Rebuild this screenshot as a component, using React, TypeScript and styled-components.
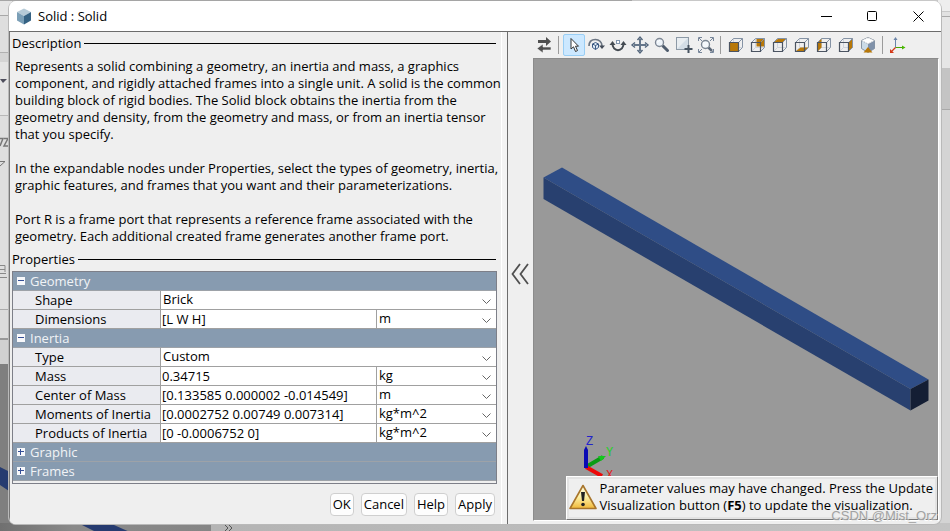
import React, { useState } from 'react';
import styled, { createGlobalStyle } from 'styled-components';

const GlobalStyle = createGlobalStyle`
  * { box-sizing: border-box; }
  body {
    margin: 0;
    overflow: hidden;
    color: #000;
    font: 13px/17px "Open Sans", "Noto Sans", sans-serif;
  }
  button, input, select { font: inherit; color: inherit; }
`;

const Desktop = styled.div`
  position: relative;
  display: flex;
  min-height: 100vh;
  padding: 1px 8px 8px 8px;
  background:
    linear-gradient(#a5a5a5, #a5a5a5) left top / 632px 1px no-repeat,
    linear-gradient(90deg, #707070, #8a8a8a 35%, #858585) left bottom / 211px 10px no-repeat,
    linear-gradient(90deg, #b4b4b4, #c4c4c4) right bottom / calc(100% - 211px) 10px no-repeat,
    linear-gradient(
      #e6e6e6 15px, #a8a8a8 15px 16px, #dedede 16px 52px, #b0b0b0 52px 53px,
      #d4d4d4 53px 62px, #e4e4e4 62px 115px, #b8b8b8 115px 116px, #dedede 116px 309px,
      #aaa 309px 310px, #dcdcdc 310px 338px, #999 338px 340px, #d0d0d0 340px 364px, #7f7f7f 364px
    ) left top / 12px 100% no-repeat,
    linear-gradient(
      #eee 11px, #c9c9c9 11px 12px, #e2e2e2 12px 16px, #a9a9a9 16px 17px,
      #e6e6e6 17px 68px, #c4c4c4 68px 109px, #a9a9a9 109px 110px, #d4d4d4 110px
    ) right top / 12px 100% no-repeat,
    #c8c8c8;
`;

const Behind = styled.svg`
  position: absolute;
  left: 0;
  bottom: 0;
`;

const BehindLeft = styled.svg`
  position: absolute;
  left: 0;
  top: 0;
`;

const Dialog = styled.main`
  position: relative;
  flex: 1;
  min-width: 0;
  display: flex;
  flex-direction: column;
  background: #efefef;
  border: 1px solid #b9b9b9;
  border-top: 0;
  border-radius: 8px;
  overflow: hidden;
`;

const TitleBar = styled.header`
  flex: none;
  height: 31px;
  display: flex;
  align-items: center;
  padding-left: 7px;
  background: #fff;
  border-bottom: 1px solid #6c6c6c;
`;

const Title = styled.h1`
  flex: 1;
  margin: 0 0 0 6px;
  font-size: 13px;
  font-weight: 400;
`;

const WindowButton = styled.button`
  width: 46px;
  height: 28px;
  padding: 0;
  border: 0;
  background: none;
  display: grid;
  place-items: center;
`;

const Body = styled.div`
  flex: 1;
  display: grid;
  grid-template-columns: minmax(0, 499fr) minmax(0, 433fr);
`;

const LeftPane = styled.section`
  display: flex;
  flex-direction: column;
  border-left: 1px solid #777;
  border-right: 1px solid #6c6c6c;
  padding-right: 5px;
  background: #f3f3f3;
`;

const Form = styled.form`
  flex: 1;
  min-width: 0;
  display: flex;
  flex-direction: column;
  padding: 3px 4px 0 2px;
  background: #efefef;
  border-right: 1px solid #fff;
`;

const Legend = styled.h2`
  display: flex;
  align-items: center;
  gap: 3px;
  margin: 0 1px 0 0;
  font-size: 13px;
  font-weight: 400;
  &::after {
    content: "";
    flex: 1;
    height: 1px;
    background: #000;
  }
`;

const Description = styled.div`
  padding: 6px 0 6px 3px;
  white-space: pre;
`;

const Paragraph = styled.p`
  margin: 0;
  & + & { margin-top: 17px; }
`;

const TableFrame = styled.div`
  margin-top: 3px;
  padding-bottom: 2px;
  border: 1px solid #7d7f88;
`;

const PropertyTable = styled.table`
  width: 100%;
  table-layout: fixed;
  border-collapse: separate;
  border-spacing: 0;
`;

const Column = styled.col<{ $width?: number }>`
  width: ${(p) => (p.$width ? `${p.$width}px` : 'auto')};
`;

const GroupCell = styled.th`
  height: 19px;
  padding: 0;
  font-weight: 400;
  text-align: left;
  background: #879bb0;
  border-bottom: 1px solid #9da2a8;
`;

const GroupButton = styled.button`
  display: flex;
  align-items: center;
  gap: 5px;
  height: 18px;
  padding: 0 0 0 4px;
  border: 0;
  background: none;
  color: #f1f3f6;
  line-height: 17px;
`;

const LabelCell = styled.th`
  height: 19px;
  padding: 0 0 0 22px;
  font-weight: 400;
  text-align: left;
  line-height: 18px;
  white-space: nowrap;
  background: #eaebf0;
  border-right: 1px solid #a0a0a0;
  border-bottom: 1px solid #a0a0a0;
`;

const ValueCell = styled.td<{ $divided?: boolean }>`
  height: 19px;
  padding: 0;
  background: #fff;
  border-right: ${(p) => (p.$divided ? '1px solid #a0a0a0' : '0')};
  border-bottom: 1px solid #a0a0a0;
`;

const TextField = styled.input`
  display: block;
  width: 100%;
  height: 18px;
  padding: 0 1px;
  border: 0;
  outline: 0;
  background: none;
`;

const SelectWrap = styled.div`
  display: flex;
  align-items: center;
  position: relative;
`;

const Select = styled.select`
  appearance: none;
  width: 100%;
  height: 18px;
  padding: 0 18px 2px 2px;
  border: 0;
  outline: 0;
  background: none;
`;

const SelectArrow = styled.svg`
  position: absolute;
  right: 5px;
  top: 8px;
  pointer-events: none;
`;

const Actions = styled.div`
  display: flex;
  justify-content: flex-end;
  gap: 7px;
  padding: 9px 2px 8px 0;
`;

const ActionButton = styled.button`
  height: 23px;
  padding: 0 2px;
  border: 1px solid #cfcfcf;
  border-radius: 4px;
  background: #fdfdfd;
`;

const RightPane = styled.section`
  display: flex;
  min-width: 0;
`;

const CollapseButton = styled.button`
  flex: none;
  width: 25px;
  padding: 0 2px 4px 0;
  border: 0;
  background: none;
`;

const Viewer = styled.div`
  flex: 1;
  min-width: 0;
  display: flex;
  flex-direction: column;
  padding: 0 2px 3px 0;
`;

const Toolbar = styled.div`
  flex: none;
  display: flex;
  align-items: center;
  height: 26px;
`;

const ToolButton = styled.button<{ $active?: boolean }>`
  flex: none;
  width: 22px;
  height: 22px;
  padding: 0;
  border: 1px solid ${(p) => (p.$active ? '#99cef5' : 'transparent')};
  border-radius: 2px;
  background: ${(p) => (p.$active ? '#cce8ff' : 'none')};
  display: grid;
  place-items: center;
`;

const ToolDivider = styled.span`
  flex: none;
  width: 1px;
  height: 18px;
  margin: 0 4px 0 3px;
  background: #9b9b9b;
`;

const Canvas = styled.div`
  position: relative;
  flex: 1;
  min-height: 0;
  background: #999;
  border: 1px solid #8b8b8b;
  border-right: 1px solid #fff;
  border-bottom: 1px solid #fff;
`;

const Scene = styled.svg`
  position: absolute;
  left: 0;
  top: 0;
  width: 100%;
`;

const AxisLabel = styled.text`
  font: 12px "Liberation Mono", monospace;
`;

const Notice = styled.div`
  position: absolute;
  right: 0;
  bottom: 0;
  display: flex;
  align-items: center;
  gap: 3px;
  height: 44px;
  padding: 0 4px 2px 2px;
  white-space: nowrap;
  background: #efefef;
  border: 1px solid #fff;
  border-right-color: #777;
  border-bottom-color: #777;
  box-shadow: inset 2px 2px #e3e3e3, inset -2px -2px #e3e3e3;
`;

const Watermark = styled.span`
  position: absolute;
  right: 4px;
  bottom: 0;
  color: #a2a2a2;
  font: 13px/16px "Liberation Sans", sans-serif;
  text-shadow: 1px 1px #e9e9e9;
`;

/* ---------- icons ---------- */

const Glyph = ({ children, size = 20 }: { children: React.ReactNode; size?: number }) => (
  <svg width={size} height={size} viewBox={`0 0 ${size} ${size}`} fill="none" aria-hidden="true">
    {children}
  </svg>
);

const AppIcon = () => (
  <svg width="16" height="17" viewBox="0 0 16 17" aria-hidden="true">
    <path d="M8 .5 15 4 8 8 1 4Z" fill="#b5cad7" />
    <path d="M1 4 8 8V16.500L1 12.500Z" fill="#7b9fb7" />
    <path d="M15 4 8 8V16.500L15 12.500Z" fill="#356283" />
  </svg>
);

const SwapIcon = () => (
  <Glyph>
    <path d="M4 5H12V2L17 6.500 12 11V8H4Z" fill="#505050" />
    <path d="M17 12H9V9L3 13.500 9 18V15H17Z" fill="#505050" stroke="#efefef" strokeWidth=".6" />
  </Glyph>
);

const PointerIcon = () => (
  <Glyph>
    <path d="M7 3.500V14L9.500 11.800 11.500 16.500 13.500 15.600 11.500 11.200H14.500Z" fill="#fff" stroke="#333" />
  </Glyph>
);

const OrbitIcon = () => (
  <Glyph>
    <path d="M3 11C3 6 6 4.500 9.500 4.500S16 7 16 11" stroke="#6c7683" strokeWidth="1.700" />
    <path d="M13 10.500H19L16 14Z" fill="#444c58" />
    <path d="M9.500 7.500 12.500 9V12.500L9.500 14.500 6.500 12.500V9Z" fill="#dfe9f4" stroke="#3c5a83" />
    <path d="M6.500 9 9.500 10.500 12.500 9M9.500 10.500V14.500" stroke="#3c5a83" />
  </Glyph>
);

const RollIcon = () => (
  <Glyph>
    <path d="M4.500 8C4 17.500 16 17.500 15.500 8" stroke="#444b52" strokeWidth="2" />
    <path d="M1.500 10 4.500 6 7.500 10ZM12.500 10 15.500 6 18.500 10Z" fill="#444b52" />
    <rect x="8.500" y="5.500" width="3" height="3" fill="#fff" stroke="#8195ad" />
  </Glyph>
);

const PanIcon = () => (
  <Glyph>
    <path d="M10 4V16M4 10H16" stroke="#65768a" strokeWidth="2" />
    <path d="M7.500 5 10 2 12.500 5M7.500 15 10 18 12.500 15M5 7.500 2 10 5 12.500M15 7.500 18 10 15 12.500" stroke="#52657b" strokeWidth="1.400" />
  </Glyph>
);

const ZoomIcon = () => (
  <Glyph>
    <path d="m11 11 4.500 4.500" stroke="#4f5c6d" strokeWidth="3" strokeLinecap="round" />
    <circle cx="7.500" cy="7.500" r="4" fill="#eef4fa" stroke="#7e8794" strokeWidth="1.400" />
    <path d="M5 7.500 8 5" stroke="#fff" />
  </Glyph>
);

const ZoomRegionIcon = () => (
  <Glyph>
    <rect x="2.500" y="2.500" width="12" height="12" fill="#d3dde6" stroke="#8c99a6" />
    <path d="M3 14 14 3H3Z" fill="#e8edf1" />
    <path d="M14.500 10V18M10.500 14H18.500" stroke="#465361" strokeWidth="2" />
  </Glyph>
);

const FitIcon = () => (
  <Glyph>
    <path d="M2.500 6V2.500H6M14 2.500H17.500V6M17.500 14V17.500H14M6 17.500H2.500V14M3 3 6 6M17 3 14 6M3 17 6 14M14 14 17 17" stroke="#77869a" />
    <path d="m12 12 4 4" stroke="#5c6878" strokeWidth="2.500" />
    <circle cx="9.500" cy="9.500" r="4" fill="#f5f9fc" stroke="#7c8793" strokeWidth="1.400" />
  </Glyph>
);

const faces: Record<string, string> = {
  front: 'M3.500 7.500H12.500V16.500H3.500Z',
  back: 'M8.500 3.500H16.500V11.500H8.500Z',
  top: 'M3.500 7.500 8.500 3.500H16.500L12.500 7.500Z',
  bottom: 'M3.500 16.500 8.500 12.500H16.500L12.500 16.500Z',
  left: 'M3.500 7.500 7.500 3.500V12.500L3.500 16.500Z',
  right: 'M12.500 7.500 16.500 3.500V12.500L12.500 16.500Z',
};

const CubeIcon = ({ face }: { face: string }) => (
  <Glyph>
    <path d="M7.500 3.500V12.500H16.500M3.500 16.500 7.500 12.500" stroke="#cfd4dc" />
    <path d={faces[face]} fill="#b87808" />
    <path d="M3.500 7.500 7.500 3.500H16.500V12.500L12.500 16.500M12.500 7.500 16.500 3.500" stroke="#8593a5" />
    <path d="M3.500 7.500H12.500V16.500H3.500Z" stroke="#4b5462" strokeWidth="1.200" />
  </Glyph>
);

const IsoIcon = () => (
  <Glyph>
    <path d="M10 2.500 16.500 5.500V13.500L10 17.500 3.500 13.500V5.500Z" fill="#cbdbe7" stroke="#8794a3" />
    <path d="M10 9 16.500 5.500V13.500L10 17.500Z" fill="#8092aa" />
    <path d="M10 2.500 16.500 5.500 10 9 3.500 5.500Z" fill="#fff" stroke="#a4aab2" strokeDasharray="1 1" />
    <path d="M10 12 14.500 17.500H5.500Z" fill="#b87808" />
  </Glyph>
);

const AxesIcon = () => (
  <Glyph>
    <path d="M7.500 4V12.500" stroke="#6a84a8" />
    <path d="M5.500 5 7.500 2 9.500 5Z" fill="#6a84a8" />
    <path d="M7.500 12.500H15" stroke="#48a800" />
    <path d="M14 10.500 17.500 12.500 14 14.500Z" fill="#48b800" />
    <path d="M7.500 12.500 3 17" stroke="#d43818" strokeWidth="1.300" />
    <path d="M2 14V18H6Z" fill="#d43818" />
  </Glyph>
);

const WarningIcon = () => (
  <svg width="28" height="26" viewBox="0 0 28 26" aria-hidden="true">
    <defs>
      <linearGradient id="warn" x2="0" y2="1">
        <stop offset="0" stopColor="#fffbe0" />
        <stop offset=".5" stopColor="#fdf0a6" />
        <stop offset="1" stopColor="#f0b838" />
      </linearGradient>
    </defs>
    <path d="M14 1.500 27 24.500H1Z" fill="url(#warn)" stroke="#a8752c" strokeWidth="1.600" strokeLinejoin="round" />
    <path d="M12 8H16L15 17H13Z" fill="#222" />
    <circle cx="14" cy="20.500" r="1.800" fill="#222" />
  </svg>
);

const ToggleIcon = ({ open }: { open: boolean }) => (
  <svg width="8" height="8" viewBox="0 0 8 8" aria-hidden="true">
    <path d="M0 0H8V8H0Z" fill="#f7f8fb" />
    <path d="M1 3H7V4H1Z" fill="#354f96" />
    {!open && <path d="M3 1H4V7H3Z" fill="#354f96" />}
  </svg>
);

/* ---------- data ---------- */

type Row = { label: string; value?: string; choice?: string; unit?: string };
type Group = { name: string; open: boolean; rows: Row[] };

const groups: Group[] = [
  {
    name: 'Geometry',
    open: true,
    rows: [
      { label: 'Shape', choice: 'Brick' },
      { label: 'Dimensions', value: '[L W H]', unit: 'm' },
    ],
  },
  {
    name: 'Inertia',
    open: true,
    rows: [
      { label: 'Type', choice: 'Custom' },
      { label: 'Mass', value: '0.34715', unit: 'kg' },
      { label: 'Center of Mass', value: '[0.133585 0.000002 -0.014549]', unit: 'm' },
      { label: 'Moments of Inertia', value: '[0.0002752 0.00749 0.007314]', unit: 'kg*m^2' },
      { label: 'Products of Inertia', value: '[0 -0.0006752 0]', unit: 'kg*m^2' },
    ],
  },
  { name: 'Graphic', open: false, rows: [] },
  { name: 'Frames', open: false, rows: [] },
];

const description = [
  'Represents a solid combining a geometry, an inertia and mass, a graphics\ncomponent, and rigidly attached frames into a single unit. A solid is the common\nbuilding block of rigid bodies. The Solid block obtains the inertia from the\ngeometry and density, from the geometry and mass, or from an inertia tensor\nthat you specify.',
  'In the expandable nodes under Properties, select the types of geometry, inertia,\ngraphic features, and frames that you want and their parameterizations.',
  'Port R is a frame port that represents a reference frame associated with the\ngeometry. Each additional created frame generates another frame port.',
];

const navigationTools = [
  { name: 'Select', icon: <PointerIcon /> },
  { name: 'Rotate', icon: <OrbitIcon /> },
  { name: 'Roll', icon: <RollIcon /> },
  { name: 'Pan', icon: <PanIcon /> },
  { name: 'Zoom', icon: <ZoomIcon /> },
  { name: 'Zoom to region', icon: <ZoomRegionIcon /> },
  { name: 'Fit to view', icon: <FitIcon /> },
];

const Dropdown = ({ id, label, value }: { id?: string; label?: string; value: string }) => (
  <SelectWrap>
    <Select id={id} aria-label={label} defaultValue={value}>
      <option>{value}</option>
    </Select>
    <SelectArrow width="9" height="6" viewBox="0 0 9 6" fill="none">
      <path d="M.5 .5 4.500 4.500 8.500 .5" stroke="#666" />
    </SelectArrow>
  </SelectWrap>
);

const Properties = () => {
  const [open, setOpen] = useState(groups.map((g) => g.open));
  return (
    <TableFrame>
      <PropertyTable>
        <colgroup>
          <Column $width={148} />
          <Column />
          <Column $width={119} />
        </colgroup>
        {groups.map((group, i) => (
          <tbody key={group.name}>
            <tr>
              <GroupCell colSpan={3}>
                <GroupButton
                  type="button"
                  aria-expanded={open[i]}
                  onClick={() => setOpen(open.map((v, n) => (n === i ? !v : v)))}
                >
                  <ToggleIcon open={open[i]} />
                  {group.name}
                </GroupButton>
              </GroupCell>
            </tr>
            {open[i] &&
              group.rows.map((row) => (
                <tr key={row.label}>
                  <LabelCell scope="row">
                    <label htmlFor={row.label}>{row.label}</label>
                  </LabelCell>
                  {row.choice ? (
                    <ValueCell colSpan={2}>
                      <Dropdown id={row.label} value={row.choice} />
                    </ValueCell>
                  ) : (
                    <>
                      <ValueCell $divided>
                        <TextField id={row.label} defaultValue={row.value} />
                      </ValueCell>
                      <ValueCell>
                        <Dropdown label={`${row.label} unit`} value={row.unit ?? ''} />
                      </ValueCell>
                    </>
                  )}
                </tr>
              ))}
          </tbody>
        ))}
      </PropertyTable>
    </TableFrame>
  );
};

const BrickScene = () => (
  <Scene viewBox="0 0 404 459" preserveAspectRatio="xMinYMin meet" role="img" aria-label="Brick solid">
    <path d="M9.500 118.500 28 108.500 394.500 320.500 376.500 330Z" fill="#2f4d86" />
    <path d="M9.500 118.500 376.500 330V351.500L9.500 140Z" fill="#28406f" />
    <path d="M376.500 330 394.500 320.500V341.500L376.500 351.500Z" fill="#141e34" />
    <path d="M52 408 69 398" stroke="#0a9c14" strokeWidth="4" />
    <path d="M64 397 72 397 67 402Z" fill="#13c81d" />
    <path d="M52 408 68 417" stroke="#ee0808" strokeWidth="4" />
    <path d="M50 409V391L52 387 54 391V409Z" fill="#0a0ab4" />
    <AxisLabel x="52" y="386" fill="#2222cc">Z</AxisLabel>
    <AxisLabel x="72" y="397" fill="#22d322">Y</AxisLabel>
    <AxisLabel x="72" y="420" fill="#e02222">X</AxisLabel>
  </Scene>
);

export default function App() {
  const [tool, setTool] = useState('Select');
  return (
    <>
      <GlobalStyle />
      <Desktop>
        <BehindLeft width="8" height="290" viewBox="0 0 8 290" fill="none" aria-hidden="true">
          <path d="M0 79H7L3 83Z" fill="#4e4e5c" />
          <path d="M0 138.500H3L0 146M4 138.500H8L4 146H8" stroke="#777" strokeWidth="1.500" />
          <path d="M0 161.500H5L0 166" stroke="#777" />
          <path d="M0 265.500H5V272M0 269.500H5M0 273.500H6M0 277.500H7" stroke="#888" />
        </BehindLeft>
        <Behind width="240" height="80" viewBox="0 0 240 80" aria-hidden="true">
          <path d="M0 14 12 20V40L0 32Z" fill="#263b70" />
          <path d="M82 72H114L132 80H98Z" fill="#263b70" />
          <path d="m225 72 3 3-3 3m4-6 3 3-3 3" fill="none" stroke="#555" />
        </Behind>
        <Dialog>
          <TitleBar>
            <AppIcon />
            <Title>Solid : Solid</Title>
            <WindowButton aria-label="Minimize">
              <svg width="11" height="11"><path d="M0 5.500H11" stroke="#000" /></svg>
            </WindowButton>
            <WindowButton aria-label="Maximize">
              <svg width="11" height="11"><rect x=".5" y=".5" width="9" height="9" rx="1" fill="none" stroke="#000" /></svg>
            </WindowButton>
            <WindowButton aria-label="Close">
              <svg width="11" height="11"><path d="m.5 .5 10 10m0-10-10 10" stroke="#000" /></svg>
            </WindowButton>
          </TitleBar>
          <Body>
            <LeftPane>
              <Form onSubmit={(e) => e.preventDefault()}>
                <Legend>Description</Legend>
                <Description>
                  {description.map((text) => (
                    <Paragraph key={text}>{text}</Paragraph>
                  ))}
                </Description>
                <Legend>Properties</Legend>
                <Properties />
                <Actions>
                  {['OK', 'Cancel', 'Help', 'Apply'].map((name) => (
                    <ActionButton key={name} type="button">{name}</ActionButton>
                  ))}
                </Actions>
              </Form>
            </LeftPane>
            <RightPane>
              <CollapseButton aria-label="Collapse panel">
                <svg width="18" height="22" viewBox="0 0 18 22" fill="none">
                  <path d="M9 1 1.500 11 9 21M17 1 9.500 11 17 21" stroke="#505050" strokeWidth="1.800" />
                </svg>
              </CollapseButton>
              <Viewer>
                <Toolbar role="toolbar">
                  <ToolButton aria-label="Update visualization"><SwapIcon /></ToolButton>
                  <ToolDivider />
                  {navigationTools.map(({ name, icon }) => (
                    <ToolButton key={name} aria-label={name} $active={tool === name} onClick={() => setTool(name)}>
                      {icon}
                    </ToolButton>
                  ))}
                  <ToolDivider />
                  {Object.keys(faces).map((face) => (
                    <ToolButton key={face} aria-label={`View ${face}`}><CubeIcon face={face} /></ToolButton>
                  ))}
                  <ToolButton aria-label="Isometric view"><IsoIcon /></ToolButton>
                  <ToolDivider />
                  <ToolButton aria-label="Toggle frames"><AxesIcon /></ToolButton>
                </Toolbar>
                <Canvas>
                  <BrickScene />
                  <Notice role="status">
                    <WarningIcon />
                    <span>
                      Parameter values may have changed. Press the Update<br />
                      Visualization button (<b>F5</b>) to update the visualization.
                    </span>
                  </Notice>
                </Canvas>
              </Viewer>
            </RightPane>
          </Body>
          <Watermark>CSDN @Mist_Orz</Watermark>
        </Dialog>
      </Desktop>
    </>
  );
}
